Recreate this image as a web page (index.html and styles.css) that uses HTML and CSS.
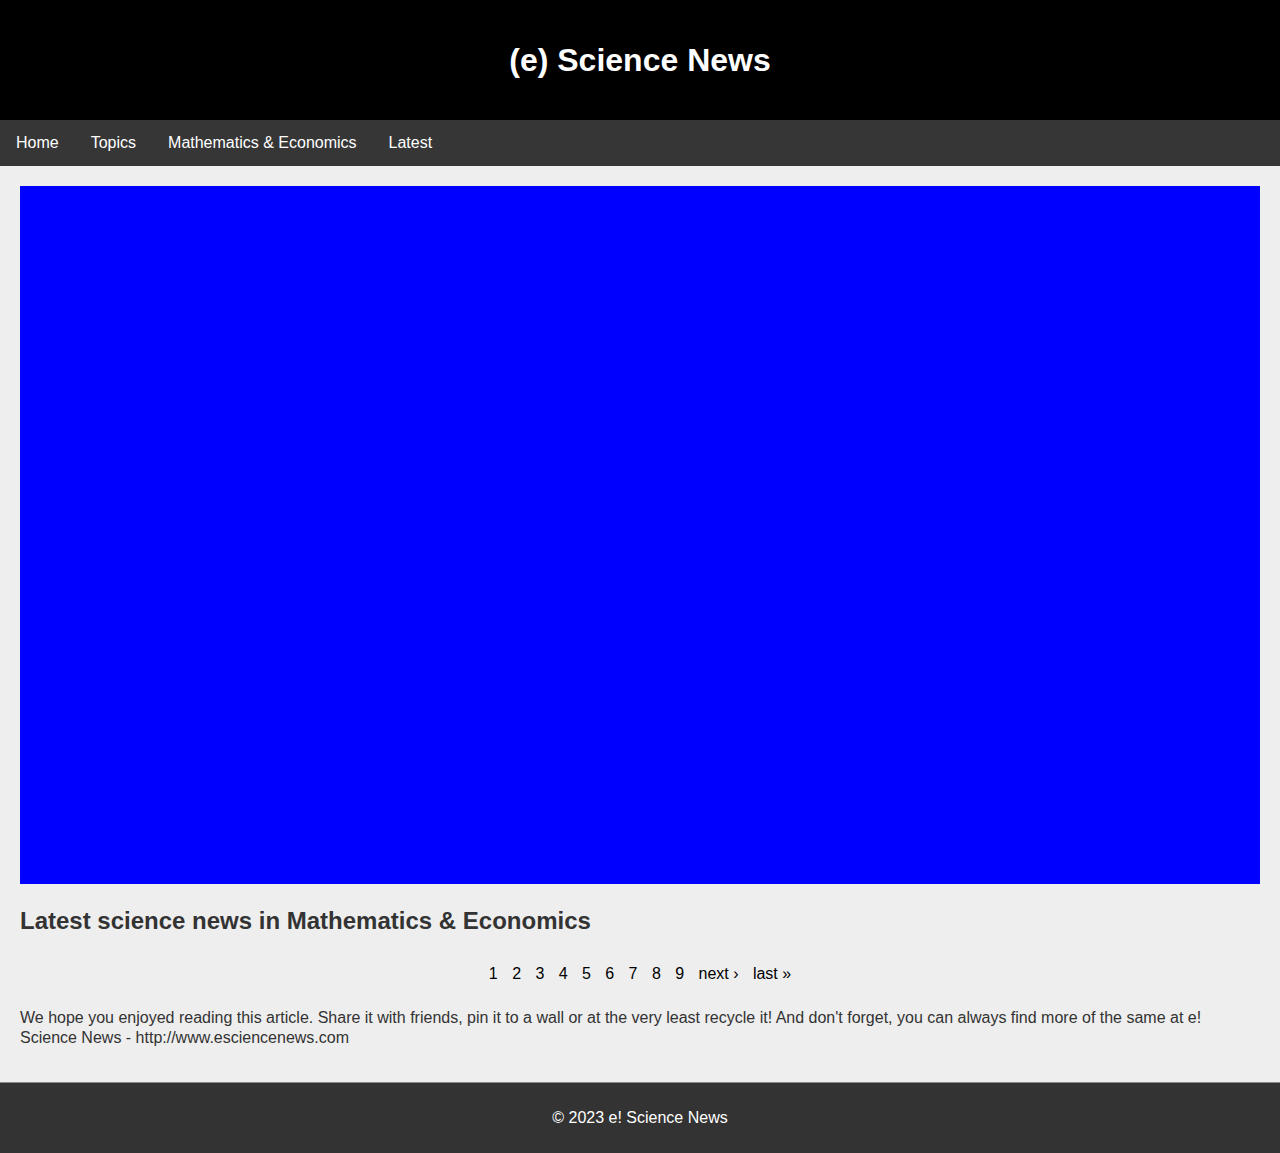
FILE: index.html
```html
<!DOCTYPE html>
<html lang="en">
<head>
<meta charset="utf-8">
<title>(e) Science News</title>
<link rel="stylesheet" href="styles.css">
</head>
<body>
<header class="site-header">
  <h1 class="site-title">(e) Science News</h1>
</header>
<nav class="site-nav">
  <a href="#" class="nav-link">Home</a>
  <a href="#" class="nav-link">Topics</a>
  <a href="#" class="nav-link">Mathematics &amp; Economics</a>
  <a href="#" class="nav-link">Latest</a>
</nav>
<main class="content">
  <div class="hero"></div>
  <h2 class="section-title">Latest science news in Mathematics &amp; Economics</h2>
  <div class="pager">
    <a href="#" class="pager-link">1</a>
    <a href="#" class="pager-link">2</a>
    <a href="#" class="pager-link">3</a>
    <a href="#" class="pager-link">4</a>
    <a href="#" class="pager-link">5</a>
    <a href="#" class="pager-link">6</a>
    <a href="#" class="pager-link">7</a>
    <a href="#" class="pager-link">8</a>
    <a href="#" class="pager-link">9</a>
    <a href="#" class="pager-link">next ›</a>
    <a href="#" class="pager-link">last »</a>
  </div>
  <p class="outro">We hope you enjoyed reading this article. Share it with friends, pin it to a wall or at the very least recycle it! And don't forget, you can always find more of the same at e! Science News - http://www.esciencenews.com</p>
</main>
<footer class="site-footer">© 2023 e! Science News</footer>
</body>
</html>
```
FILE: styles.css
```css
* { box-sizing: border-box; }
html, body {
  margin: 0;
  padding: 0;
}
body {
  font-family: "Liberation Sans", Arial, sans-serif;
  font-size: 16px;
  background: #eeeeee;
  color: #333333;
}
.site-header {
  background: #000000;
  height: 120px;
  display: flex;
  align-items: center;
  justify-content: center;
}
.site-title {
  margin: 0;
  color: #ffffff;
  font-size: 32px;
  font-weight: bold;
  line-height: 36px;
}
.site-nav {
  background: #363636;
  height: 46px;
  display: flex;
  align-items: center;
}
.nav-link {
  color: #ffffff;
  text-decoration: none;
  padding: 0 16px;
  line-height: 46px;
}
.content {
  padding: 20px 20px 0;
}
.hero {
  background: #0000ff;
  height: 698px;
}
.section-title {
  margin: 23px 0 0;
  font-size: 24px;
  line-height: 28px;
  font-weight: bold;
  color: #333333;
}
.pager {
  margin-top: 29px;
  display: flex;
  justify-content: center;
  gap: 14.4px;
  line-height: 20px;
}
.pager-link {
  color: #000000;
  text-decoration: none;
}
.outro {
  margin: 24px 0 0;
  padding-bottom: 34px;
  line-height: 20px;
}
.site-footer {
  background: #333333;
  border-top: 1px solid #8a8a8a;
  color: #ffffff;
  text-align: center;
  height: 71px;
  padding-top: 25px;
  line-height: 20px;
}
```
